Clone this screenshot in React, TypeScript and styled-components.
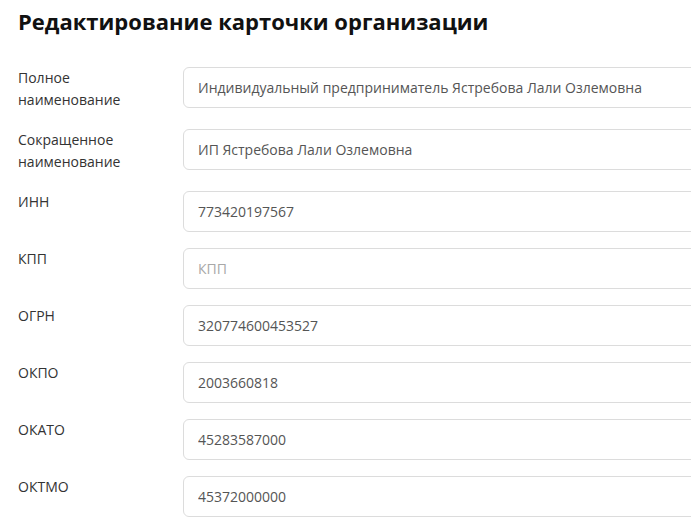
import React from 'react';
import styled, { createGlobalStyle } from 'styled-components';

const GlobalStyle = createGlobalStyle`
  html, body {
    margin: 0;
    padding: 0;
    background: #ffffff;
    overflow: hidden;
  }

  body {
    font-family: 'Open Sans', 'Noto Sans', sans-serif;
  }
`;

interface Field {
  label: string;
  value?: string;
  placeholder?: string;
}

const fields: Field[] = [
  { label: 'Полное наименование', value: 'Индивидуальный предприниматель Ястребова Лали Озлемовна' },
  { label: 'Сокращенное наименование', value: 'ИП Ястребова Лали Озлемовна' },
  { label: 'ИНН', value: '773420197567' },
  { label: 'КПП', placeholder: 'КПП' },
  { label: 'ОГРН', value: '320774600453527' },
  { label: 'ОКПО', value: '2003660818' },
  { label: 'ОКАТО', value: '45283587000' },
  { label: 'ОКТМО', value: '45372000000' },
];

export default function App() {
  return (
    <>
      <GlobalStyle />
      <Page>
        <Title>Редактирование карточки организации</Title>
        <Form>
          {fields.map(f => (
            <Row key={f.label}>
              <Label>{f.label}</Label>
              <Input defaultValue={f.value} placeholder={f.placeholder} />
            </Row>
          ))}
        </Form>
      </Page>
    </>
  );
}

const Page = styled.div`
  padding: 6px 0 0 18px;
  width: 760px;
`;

const Title = styled.h1`
  margin: 0 0 31px;
  font-size: 22px;
  line-height: 30px;
  font-weight: 700;
  color: #111111;
`;

const Form = styled.div`
  display: flex;
  flex-direction: column;
  gap: 16px;
`;

const Row = styled.div`
  display: flex;
  flex-direction: row;
  align-items: flex-start;
`;

const Label = styled.div`
  width: 165px;
  flex-shrink: 0;
  padding: 0 20px 2px 0;
  box-sizing: border-box;
  font-size: 14px;
  line-height: 22px;
  color: #333333;
`;

const Input = styled.input`
  width: 560px;
  height: 41px;
  box-sizing: border-box;
  padding: 0 14px;
  border: 1px solid #dcdcdc;
  border-radius: 6px;
  background: #ffffff;
  font-family: 'Open Sans', 'Noto Sans', sans-serif;
  font-size: 14px;
  color: #555555;
  outline: none;

  &::placeholder {
    color: #a8a8a8;
  }
`;
